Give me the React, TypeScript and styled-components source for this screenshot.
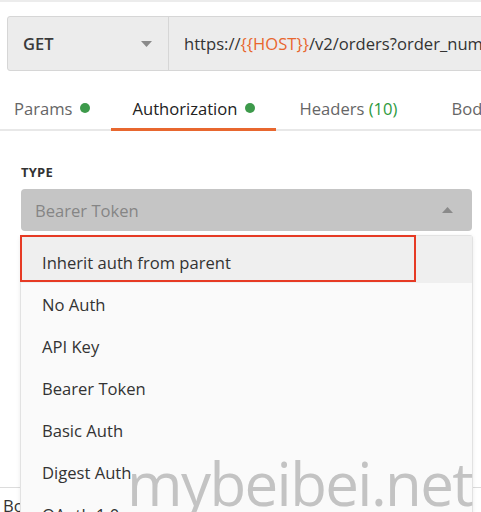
import React from "react";
import styled, { createGlobalStyle } from "styled-components";

const Global = createGlobalStyle`
  html, body { margin: 0; padding: 0; background: #ffffff; }
  body { font-family: "Open Sans", "DejaVu Sans", sans-serif; color: #333; overflow: hidden; }
  * { box-sizing: border-box; }
`;

const Page = styled.div`
  position: relative;
  width: 481px;
  height: 512px;
  overflow: hidden;
  border-top: 2px solid #ececec;
`;

const UrlBar = styled.div`
  display: flex;
  margin: 14px 0 0 7px;
  width: 560px;
  height: 55px;
  background: #ececec;
  border: 1px solid #d6d6d6;
  border-radius: 3px;
`;

const Method = styled.div`
  display: flex;
  align-items: center;
  justify-content: space-between;
  width: 161px;
  padding: 0 16px 0 15px;
  border-right: 1px solid #d6d6d6;
  font-size: 16.5px;
  font-weight: 600;
  color: #3a3a3a;
`;

const Url = styled.div`
  display: flex;
  align-items: center;
  padding-left: 15px;
  font-size: 16.6px;
  color: #333;
  white-space: nowrap;
`;

const Var = styled.span`
  color: #e8662e;
`;

const Tabs = styled.div`
  display: flex;
  height: 60px;
  margin-left: -7px;
  border-bottom: 2px solid #e8e8e8;
`;

const Tab = styled.div<{ $active?: boolean; $gap?: number }>`
  display: flex;
  align-items: center;
  gap: 8px;
  padding: 17px 21px 0;
  margin-left: ${(p) => p.$gap ?? 0}px;
  font-size: 16.6px;
  color: ${(p) => (p.$active ? "#222" : "#666")};
  border-bottom: 3px solid ${(p) => (p.$active ? "#e8672f" : "transparent")};
  margin-bottom: -2px;
  white-space: nowrap;
`;

const Dot = styled.span`
  width: 10px;
  height: 10px;
  border-radius: 50%;
  background: #3d9a4b;
`;

const Count = styled.span`
  color: #2d9a3d;
`;

const Panel = styled.div`
  position: relative;
  padding: 32px 9px 0 21px;
  height: 357px;
  border-bottom: 1px solid #dcdcdc;
`;

const Label = styled.div`
  font-size: 13px;
  font-weight: 700;
  color: #333;
  letter-spacing: 0.2px;
  line-height: 18px;
`;

const Select = styled.div`
  display: flex;
  align-items: center;
  justify-content: space-between;
  margin-top: 8px;
  height: 42px;
  width: 451px;
  padding: 0 19px 0 14px;
  background: #c5c5c5;
  border-radius: 4px;
  font-size: 16.6px;
  color: #858585;
`;

const Menu = styled.div`
  position: absolute;
  left: 20px;
  top: 104px;
  width: 453px;
  background: #fafafa;
  border: 1px solid #e2e2e2;
  border-radius: 3px;
  box-shadow: 0 1px 4px rgba(0, 0, 0, 0.08);
  z-index: 2;
`;

const Item = styled.div<{ $highlight?: boolean }>`
  display: flex;
  align-items: center;
  height: 42px;
  padding-left: 21px;
  font-size: 16.6px;
  color: #333;
  background: ${(p) => (p.$highlight ? "#efefef" : "transparent")};
  &:first-child {
    height: 47px;
    padding-top: 5px;
  }
`;

const Annotation = styled.div`
  position: absolute;
  left: -1px;
  top: -1px;
  width: 396px;
  height: 47px;
  border: 2px solid #e63a24;
  pointer-events: none;
`;

const Footer = styled.div`
  padding: 6px 0 0 3px;
  font-size: 16.6px;
  color: #333;
`;

const Watermark = styled.div`
  position: absolute;
  left: 127px;
  top: 440px;
  font-family: "Open Sans", sans-serif;
  font-size: 60px;
  letter-spacing: -1.6px;
  color: #c3c3c3;
  line-height: 82px;
  z-index: 3;
  white-space: nowrap;
`;

const Caret = ({ up }: { up?: boolean }) => (
  <svg width="11" height="6" viewBox="0 0 11 6">
    <path d={up ? "M0 6 L5.5 0 L11 6 Z" : "M0 0 L5.5 6 L11 0 Z"} fill="#8a8a8a" />
  </svg>
);

const items = [
  "Inherit auth from parent",
  "No Auth",
  "API Key",
  "Bearer Token",
  "Basic Auth",
  "Digest Auth",
  "OAuth 1.0",
];

export default function App() {
  return (
    <>
      <Global />
      <Page>
        <UrlBar>
          <Method>
            GET
            <Caret />
          </Method>
          <Url>
            https://<Var>{"{{HOST}}"}</Var>/v2/orders?order_number=
          </Url>
        </UrlBar>
        <Tabs>
          <Tab>
            Params <Dot />
          </Tab>
          <Tab $active>
            Authorization <Dot />
          </Tab>
          <Tab $gap={2}>
            <span>
              Headers <Count>(10)</Count>
            </span>
          </Tab>
          <Tab $gap={12}>Body</Tab>
        </Tabs>
        <Panel>
          <Label>TYPE</Label>
          <Select>
            Bearer Token
            <Caret up />
          </Select>
          <Menu>
            {items.map((t, i) => (
              <Item key={t} $highlight={i === 0}>
                {t}
              </Item>
            ))}
            <Annotation />
          </Menu>
        </Panel>
        <Footer>Body</Footer>
        <Watermark>mybeibei.net</Watermark>
      </Page>
    </>
  );
}
